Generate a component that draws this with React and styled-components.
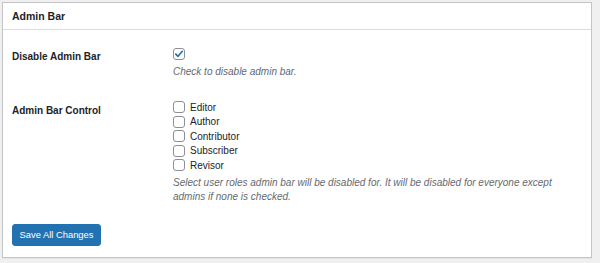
import React from "react";
import styled, { createGlobalStyle } from "styled-components";

const Global = createGlobalStyle`
  html, body {
    margin: 0;
    padding: 0;
    background: #f0f0f1;
    font-family: "Liberation Sans", Arial, sans-serif;
    color: #1d2327;
  }
`;

const Page = styled.div`
  padding: 2px 0 0 2px;
  width: 600px;
  height: 263px;
  box-sizing: border-box;
`;

const Panel = styled.section`
  width: 590px;
  height: 256px;
  box-sizing: border-box;
  background: #fff;
  border: 1px solid #c3c4c7;
  box-shadow: 0 1px 1px rgba(0, 0, 0, 0.04);
  display: flex;
  flex-direction: column;
`;

const PanelHeader = styled.h2`
  margin: 0;
  height: 26px;
  line-height: 26px;
  padding-left: 9px;
  font-size: 10.5px;
  font-weight: 700;
  border-bottom: 1px solid #dcdcde;
`;

const PanelBody = styled.div`
  padding: 0 9px;
`;

const FormRow = styled.div`
  display: grid;
  grid-template-columns: 161px 1fr;
  padding-top: ${(p) => p.$top}px;
`;

const Label = styled.div`
  font-size: 10px;
  font-weight: 700;
  line-height: 13px;
  padding-top: ${(p) => p.$top}px;
`;

const Field = styled.div`
  display: flex;
  flex-direction: column;
`;

const Option = styled.label`
  display: flex;
  align-items: center;
  gap: 5px;
  height: 14.5px;
  font-size: 10px;
  line-height: 13px;
  color: #1d2327;
`;

const Box = styled.span`
  display: inline-flex;
  align-items: center;
  justify-content: center;
  width: 12px;
  height: 12px;
  box-sizing: border-box;
  border: 1px solid #8c8f94;
  border-radius: 3px;
  background: #fff;
  flex: none;
`;

const Description = styled.p`
  margin: ${(p) => p.$gap}px 0 0;
  font-size: 10px;
  line-height: 14.5px;
  font-style: italic;
  color: #646970;
  max-width: 395px;
`;

const Button = styled.button`
  margin-top: ${(p) => p.$gap}px;
  width: 89px;
  height: 22px;
  padding: 0;
  border: 1px solid #2271b1;
  border-radius: 3px;
  background: #2271b1;
  color: #fff;
  font-family: "Liberation Sans", Arial, sans-serif;
  font-size: 9.4px;
  cursor: pointer;
`;

function Checkbox({ checked }) {
  return (
    <Box>
      {checked && (
        <svg width="10" height="10" viewBox="0 0 10 10">
          <path
            d="M1.8 5.2 L4 7.3 L8.3 2.3"
            fill="none"
            stroke="#2271b1"
            strokeWidth="1.7"
            strokeLinecap="round"
            strokeLinejoin="round"
          />
        </svg>
      )}
    </Box>
  );
}

const roles = ["Editor", "Author", "Contributor", "Subscriber", "Revisor"];

export default function App() {
  return (
    <>
      <Global />
      <Page>
        <Panel>
          <PanelHeader>Admin Bar</PanelHeader>
          <PanelBody>
            <FormRow $top={17}>
              <Label $top={3}>Disable Admin Bar</Label>
              <Field>
                <Option>
                  <Checkbox checked />
                </Option>
                <Description $gap={3}>Check to disable admin bar.</Description>
              </Field>
            </FormRow>
            <FormRow $top={21}>
              <Label $top={4}>Admin Bar Control</Label>
              <Field>
                {roles.map((r) => (
                  <Option key={r}>
                    <Checkbox />
                    {r}
                  </Option>
                ))}
                <Description $gap={3}>
                  Select user roles admin bar will be disabled for. It will be
                  disabled for everyone except admins if none is checked.
                </Description>
              </Field>
            </FormRow>
            <Button $gap={19}>Save All Changes</Button>
          </PanelBody>
        </Panel>
      </Page>
    </>
  );
}
